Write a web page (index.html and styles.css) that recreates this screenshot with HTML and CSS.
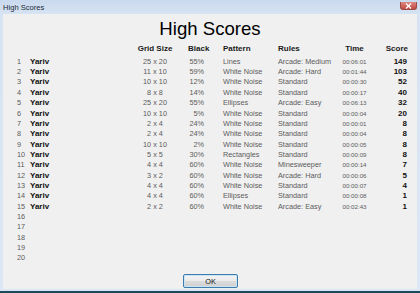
FILE: index.html
```html
<!DOCTYPE html>
<html>
<head>
<meta charset="utf-8">
<link rel="stylesheet" href="styles.css">
</head>
<body>
<div class="window">
  <div class="titlebar">
    <span class="title">High Scores</span>
    <span class="close"><svg width="7" height="6" viewBox="0 0 7 6"><path d="M1 0.5 L6 5.5 M6 0.5 L1 5.5" stroke="#fff" stroke-width="1.4"/></svg></span>
  </div>
  <div class="client">
    <h1 class="heading">High Scores</h1>
    <div class="table">
      <div class="row head">
        <span class="c-rank"></span><span class="c-name"></span><span class="c-grid">Grid Size</span><span class="c-black">Black</span><span class="c-pat">Pattern</span><span class="c-rules">Rules</span><span class="c-time">Time</span><span class="c-score">Score</span>
      </div>
      <div class="row"><span class="c-rank">1</span><span class="c-name">Yariv</span><span class="c-grid">25 x 20</span><span class="c-black">55%</span><span class="c-pat">Lines</span><span class="c-rules">Arcade: Medium</span><span class="c-time">00:06:01</span><span class="c-score">149</span></div>
      <div class="row"><span class="c-rank">2</span><span class="c-name">Yariv</span><span class="c-grid">11 x 10</span><span class="c-black">59%</span><span class="c-pat">White Noise</span><span class="c-rules">Arcade: Hard</span><span class="c-time">00:01:44</span><span class="c-score">103</span></div>
      <div class="row"><span class="c-rank">3</span><span class="c-name">Yariv</span><span class="c-grid">10 x 10</span><span class="c-black">12%</span><span class="c-pat">White Noise</span><span class="c-rules">Standard</span><span class="c-time">00:00:30</span><span class="c-score">52</span></div>
      <div class="row"><span class="c-rank">4</span><span class="c-name">Yariv</span><span class="c-grid">8 x 8</span><span class="c-black">14%</span><span class="c-pat">White Noise</span><span class="c-rules">Standard</span><span class="c-time">00:00:17</span><span class="c-score">40</span></div>
      <div class="row"><span class="c-rank">5</span><span class="c-name">Yariv</span><span class="c-grid">25 x 20</span><span class="c-black">55%</span><span class="c-pat">Ellipses</span><span class="c-rules">Arcade: Easy</span><span class="c-time">00:06:13</span><span class="c-score">32</span></div>
      <div class="row"><span class="c-rank">6</span><span class="c-name">Yariv</span><span class="c-grid">10 x 10</span><span class="c-black">5%</span><span class="c-pat">White Noise</span><span class="c-rules">Standard</span><span class="c-time">00:00:04</span><span class="c-score">20</span></div>
      <div class="row"><span class="c-rank">7</span><span class="c-name">Yariv</span><span class="c-grid">2 x 4</span><span class="c-black">24%</span><span class="c-pat">White Noise</span><span class="c-rules">Standard</span><span class="c-time">00:00:01</span><span class="c-score">8</span></div>
      <div class="row"><span class="c-rank">8</span><span class="c-name">Yariv</span><span class="c-grid">2 x 4</span><span class="c-black">24%</span><span class="c-pat">White Noise</span><span class="c-rules">Standard</span><span class="c-time">00:00:04</span><span class="c-score">8</span></div>
      <div class="row"><span class="c-rank">9</span><span class="c-name">Yariv</span><span class="c-grid">10 x 10</span><span class="c-black">2%</span><span class="c-pat">White Noise</span><span class="c-rules">Standard</span><span class="c-time">00:00:05</span><span class="c-score">8</span></div>
      <div class="row"><span class="c-rank">10</span><span class="c-name">Yariv</span><span class="c-grid">5 x 5</span><span class="c-black">30%</span><span class="c-pat">Rectangles</span><span class="c-rules">Standard</span><span class="c-time">00:00:09</span><span class="c-score">8</span></div>
      <div class="row"><span class="c-rank">11</span><span class="c-name">Yariv</span><span class="c-grid">4 x 4</span><span class="c-black">60%</span><span class="c-pat">White Noise</span><span class="c-rules">Minesweeper</span><span class="c-time">00:00:14</span><span class="c-score">7</span></div>
      <div class="row"><span class="c-rank">12</span><span class="c-name">Yariv</span><span class="c-grid">3 x 2</span><span class="c-black">60%</span><span class="c-pat">White Noise</span><span class="c-rules">Arcade: Hard</span><span class="c-time">00:00:06</span><span class="c-score">5</span></div>
      <div class="row"><span class="c-rank">13</span><span class="c-name">Yariv</span><span class="c-grid">4 x 4</span><span class="c-black">60%</span><span class="c-pat">White Noise</span><span class="c-rules">Standard</span><span class="c-time">00:00:07</span><span class="c-score">4</span></div>
      <div class="row"><span class="c-rank">14</span><span class="c-name">Yariv</span><span class="c-grid">4 x 4</span><span class="c-black">60%</span><span class="c-pat">Ellipses</span><span class="c-rules">Standard</span><span class="c-time">00:00:08</span><span class="c-score">1</span></div>
      <div class="row"><span class="c-rank">15</span><span class="c-name">Yariv</span><span class="c-grid">2 x 2</span><span class="c-black">60%</span><span class="c-pat">White Noise</span><span class="c-rules">Arcade: Easy</span><span class="c-time">00:02:43</span><span class="c-score">1</span></div>
      <div class="row"><span class="c-rank">16</span></div>
      <div class="row"><span class="c-rank">17</span></div>
      <div class="row"><span class="c-rank">18</span></div>
      <div class="row"><span class="c-rank">19</span></div>
      <div class="row"><span class="c-rank">20</span></div>
    </div>
    <div class="actions"><button class="ok">OK</button></div>
  </div>
</div>
</body>
</html>
```

FILE: styles.css
```css
html, body {
  margin: 0;
  padding: 0;
}
body {
  width: 420px;
  height: 293px;
  overflow: hidden;
  font-family: "Liberation Sans", Arial, sans-serif;
}
.window {
  box-sizing: border-box;
  width: 420px;
  height: 293px;
  display: flex;
  flex-direction: column;
  background: linear-gradient(#d6e3f2, #dbe7f4);
  border-bottom: 2px solid #1d4a5a;
}
.titlebar {
  height: 13px;
  flex: none;
  display: flex;
  align-items: center;
  justify-content: space-between;
  padding: 0 3px 0 3px;
  background: linear-gradient(#c9d9ee, #d5e2f2);
  position: relative;
}
.title {
  font-size: 7.6px;
  color: #1c2a3a;
  margin-top: 1px;
}
.close {
  position: absolute;
  right: 3px;
  top: 2px;
  width: 17px;
  height: 8px;
  box-sizing: border-box;
  background: linear-gradient(#dc8a84, #c44a42);
  border: 1px solid #9b4a45;
  border-top: none;
  border-radius: 0 0 3px 3px;
  display: flex;
  align-items: center;
  justify-content: center;
}
.close svg {
  display: block;
}
.client {
  flex: 1;
  margin: 1px 3px 2px 3px;
  background: #f0f0f0;
  display: flex;
  flex-direction: column;
}
.heading {
  margin: 3.5px 0 0 0;
  height: 22px;
  line-height: 22px;
  font-size: 18.6px;
  font-weight: normal;
  text-align: center;
  color: #000;
}
.table {
  margin-top: 4.8px;
  padding-left: 14px;
}
.row {
  display: grid;
  grid-template-columns: 13px 100px 50px 24px 74px 62px 29px 38px;
  height: 10.35px;
  line-height: 10.35px;
  font-size: 7.3px;
  color: #5c5c5c;
  white-space: nowrap;
}
.row.head {
  margin-bottom: 2.15px;
  font-weight: bold;
  font-size: 8px;
  color: #1a1a1a;
}
.c-rank {
  text-align: left;
}
.c-name {
  font-weight: bold;
  font-size: 8px;
  color: #111;
}
.c-grid {
  text-align: center;
}
.c-black {
  text-align: right;
}
.head .c-black {
  text-align: left;
  padding-left: 8px;
}
.c-pat {
  padding-left: 19px;
}
.c-time {
  text-align: center;
  font-size: 6.2px;
}
.head .c-time {
  font-size: 8px;
}
.c-score {
  text-align: right;
  font-weight: bold;
  font-size: 8px;
  color: #111;
}
.head .c-score {
  color: #1a1a1a;
  margin-right: -1px;
}
.actions {
  margin-top: auto;
  margin-bottom: 1px;
  display: flex;
  justify-content: center;
  padding-left: 1px;
}
.ok {
  width: 55px;
  height: 14px;
  padding: 0;
  box-sizing: border-box;
  font-family: "Liberation Sans", Arial, sans-serif;
  font-size: 7.3px;
  color: #111;
  border: 1px solid #3d7bad;
  border-radius: 2px;
  background: linear-gradient(#f4f4f4 0%, #ebebeb 48%, #dcdcdc 52%, #cfcfcf 100%);
  box-shadow: inset 0 0 0 1px #c8e4f6;
}
```
